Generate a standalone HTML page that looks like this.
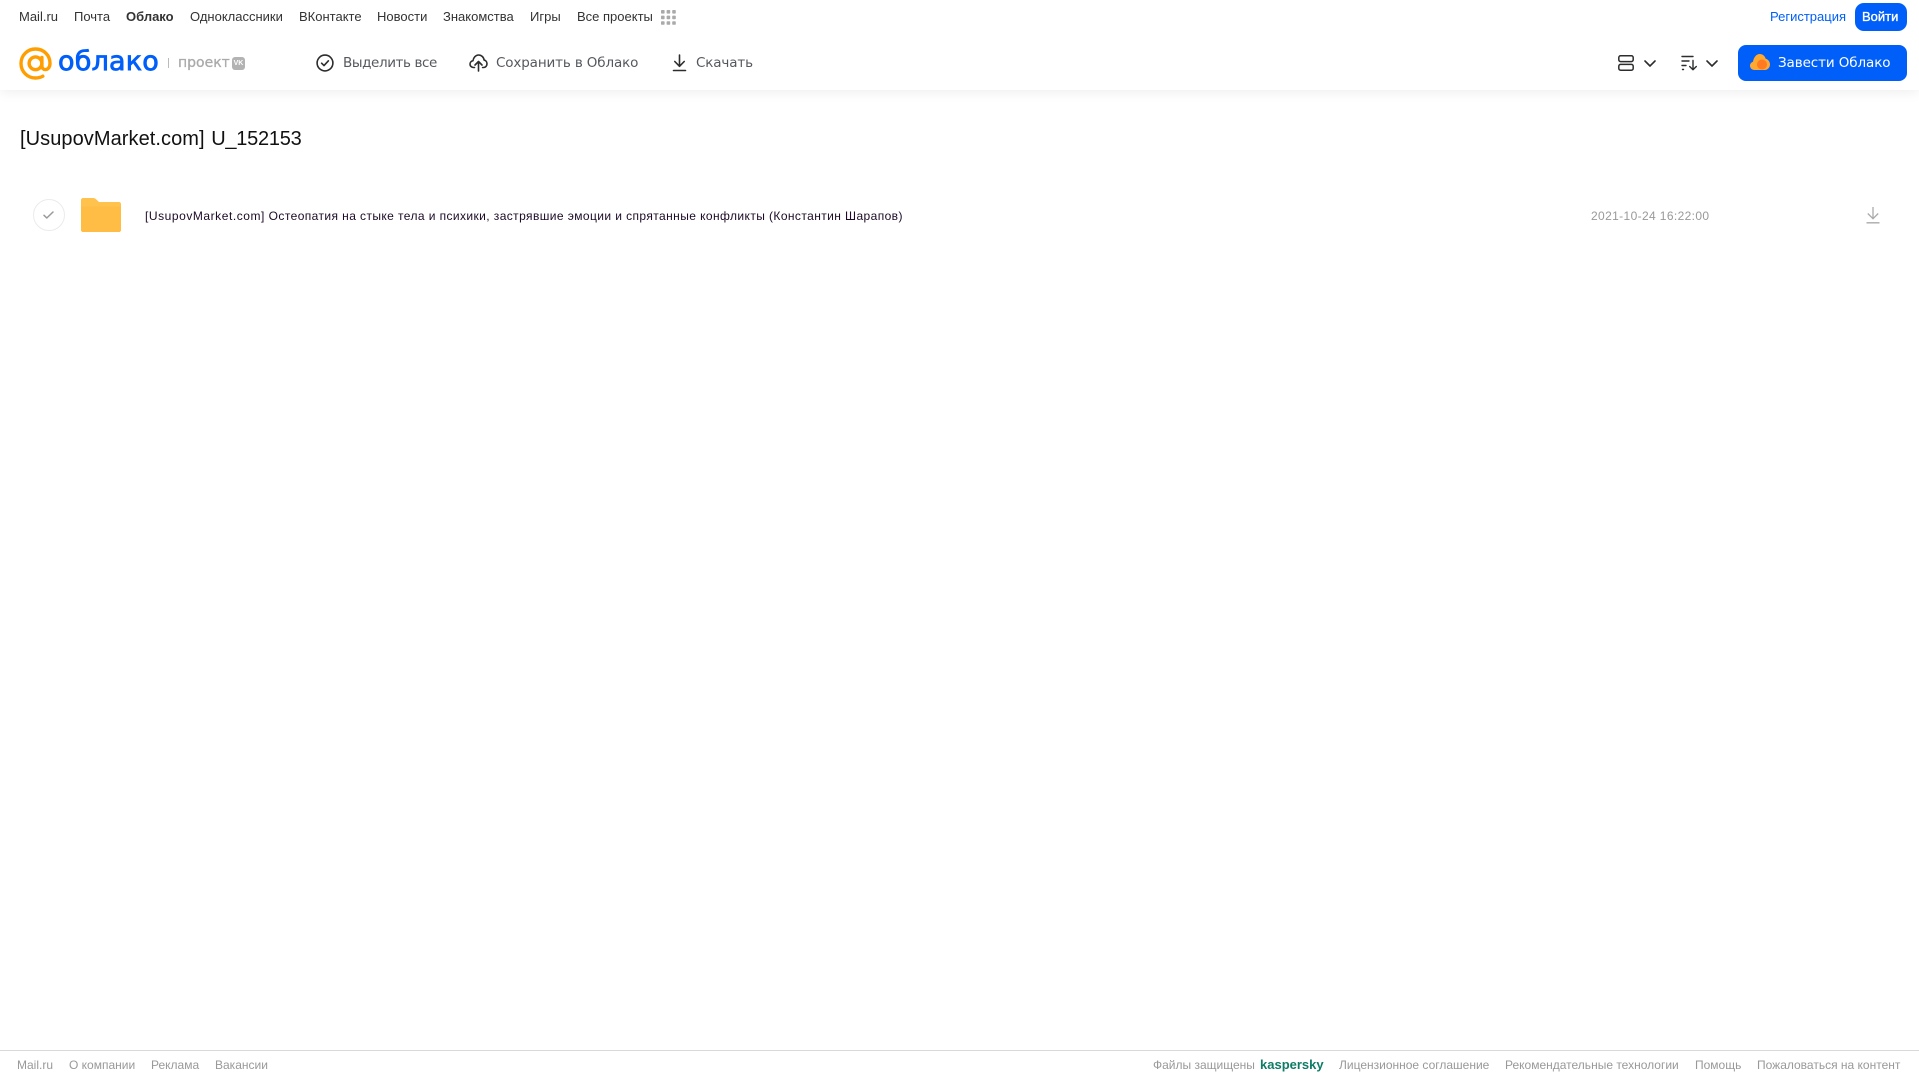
<!DOCTYPE html>
<html lang="ru"><head><meta charset="utf-8"><title>Облако</title>
<style>
html,body{margin:0;padding:0;background:#fff;}
body{width:1919px;height:1079px;overflow:hidden;position:relative;font-family:"Liberation Sans","Noto Sans CJK SC",sans-serif;color:#333;}
.t{position:absolute;white-space:nowrap;line-height:20px;}
.n{font-size:13px;top:7px;color:#333;}
.b{font-family:"DejaVu Sans",sans-serif;font-size:13.5px;top:53px;color:#55585e;}
.f{font-size:12px;top:1055px;color:#999;}
svg{position:absolute;}
</style></head><body>
<div style="position:absolute;left:0;top:0;width:1919px;height:90px;background:#fff;box-shadow:0 2px 12px rgba(0,0,0,.07);"></div>

<span class="t n" style="left:19px;">Mail.ru</span>
<span class="t n" style="left:74px;">Почта</span>
<span class="t n" style="left:126px;font-weight:bold;">Облако</span>
<span class="t n" style="left:190px;">Одноклассники</span>
<span class="t n" style="left:299px;">ВКонтакте</span>
<span class="t n" style="left:377px;">Новости</span>
<span class="t n" style="left:443px;">Знакомства</span>
<span class="t n" style="left:530px;">Игры</span>
<span class="t n" style="left:577px;">Все проекты</span>
<svg style="left:661px;top:10px" width="15" height="15" viewBox="0 0 15 15" fill="#aaa"><rect x="0" y="0" width="3.6" height="3.6" rx=".8"/><rect x="5.6" y="0" width="3.6" height="3.6" rx=".8"/><rect x="11.2" y="0" width="3.6" height="3.6" rx=".8"/><rect x="0" y="5.6" width="3.6" height="3.6" rx=".8"/><rect x="5.6" y="5.6" width="3.6" height="3.6" rx=".8"/><rect x="11.2" y="5.6" width="3.6" height="3.6" rx=".8"/><rect x="0" y="11.2" width="3.6" height="3.6" rx=".8"/><rect x="5.6" y="11.2" width="3.6" height="3.6" rx=".8"/><rect x="11.2" y="11.2" width="3.6" height="3.6" rx=".8"/></svg>

<span class="t n" style="left:1770px;color:#005ff9;">Регистрация</span>
<div style="position:absolute;left:1855px;top:3px;width:52px;height:28px;border-radius:9px;background:#005ff9;"></div>
<span class="t n" style="left:1862px;color:#fff;-webkit-text-stroke:.35px #fff;">Войти</span>

<svg style="left:19px;top:47px" width="33" height="33" viewBox="0 0 33 33" fill="none" stroke="#ff9e00" stroke-width="3.4" stroke-linecap="round"><circle cx="16.5" cy="16.3" r="6.4"/><path d="M22.9 10.500v8.300c0 2.400 1.600 3.800 3.400 3.800 2.500 0 4.700-2.300 4.700-6.300C31 8.200 24.600 2 16.500 2 8.500 2 2 8.400 2 16.500S8.500 31 16.500 31c2.900 0 5.200-.6 7.300-1.800"/></svg>
<span class="t" style="left:58px;top:46px;line-height:32px;font-family:'DejaVu Sans',sans-serif;font-size:27px;color:#005ff9;-webkit-text-stroke:.8px #005ff9;letter-spacing:.2px;">облако</span>
<div style="position:absolute;left:168px;top:58px;width:1px;height:10px;background:#bbb;"></div>
<span class="t" style="left:178px;top:53px;font-family:'DejaVu Sans',sans-serif;font-size:14px;color:#aaa;-webkit-text-stroke:.3px #aaa;">проект</span>
<div style="position:absolute;left:232px;top:57px;width:13px;height:13px;border-radius:3px;background:#b3b3b3;color:#fff;font:bold 7px/13px 'Liberation Sans',sans-serif;text-align:center;">VK</div>

<svg style="left:316px;top:54px" width="18" height="18" viewBox="0 0 18 18" fill="none" stroke="#2c2d2e" stroke-width="1.6" stroke-linecap="round" stroke-linejoin="round"><circle cx="9" cy="9" r="7.9"/><path d="M5.600 9.200l2.400 2.400 4.400-4.800"/></svg>
<span class="t b" style="left:343px;letter-spacing:-.4px;">Выделить все</span>
<svg style="left:469px;top:54px" width="19" height="18" viewBox="0 0 19 18" fill="none" stroke="#2c2d2e" stroke-width="1.6" stroke-linecap="round" stroke-linejoin="round"><path d="M5.500 13.500H4.600C2.600 13.500 1 12 1 10.100c0-1.700 1.300-3.100 3-3.400C4.400 3.500 6.700 1 9.600 1c2.900 0 5.200 2.300 5.500 5.100 1.700.3 2.900 1.900 2.900 3.700 0 2-1.500 3.700-3.500 3.700h-.9"/><path d="M9.500 17V8M6 11l3.500-3.500L13 11"/></svg>
<span class="t b" style="left:496px;letter-spacing:-.14px;">Сохранить в Облако</span>
<svg style="left:672px;top:54px" width="15" height="18" viewBox="0 0 15 18" fill="none" stroke="#2c2d2e" stroke-width="1.6" stroke-linecap="round" stroke-linejoin="round"><path d="M7.500 1v11M2.800 7.500l4.700 4.800 4.700-4.800M1.500 16.500h12"/></svg>
<span class="t b" style="left:696px;letter-spacing:-.15px;">Скачать</span>

<svg style="left:1618px;top:55px" width="16" height="16" viewBox="0 0 16 16" fill="none" stroke="#2c2d2e" stroke-width="1.5"><rect x=".8" y=".8" width="14.400" height="5.800" rx="1.800"/><rect x=".8" y="9.400" width="14.400" height="5.800" rx="1.800"/></svg>
<svg style="left:1644px;top:60px" width="12" height="7" viewBox="0 0 12 7" fill="none" stroke="#2c2d2e" stroke-width="1.6" stroke-linecap="round" stroke-linejoin="round"><path d="M1 1l5 5 5-5"/></svg>
<svg style="left:1681px;top:55px" width="17" height="16" viewBox="0 0 17 16" fill="none" stroke="#2c2d2e" stroke-width="1.400" stroke-linecap="round" stroke-linejoin="round"><path d="M1 1.500h11M1 6h7M1 10.500h4M1.500 14.500h1M12 5.500v9M8.700 11.500l3.300 3.200 3.300-3.200"/></svg>
<svg style="left:1706px;top:60px" width="12" height="7" viewBox="0 0 12 7" fill="none" stroke="#2c2d2e" stroke-width="1.6" stroke-linecap="round" stroke-linejoin="round"><path d="M1 1l5 5 5-5"/></svg>

<div style="position:absolute;left:1738px;top:45px;width:169px;height:36px;border-radius:8px;background:#005ff9;"></div>
<svg style="left:1750px;top:54px" width="20" height="17" viewBox="0 0 20 17"><path d="M4.500 16C2 16 0 14.200 0 11.800c0-2 1.300-3.500 3-4C3.700 3.300 6.400 0 9.700 0c3 0 5.200 2 6 4.800 2.500.6 4.300 3 4.300 5.700 0 3-2.400 5.500-5.300 5.500z" fill="#ffa930"/><circle cx="12" cy="10.500" r="5" fill="#ff7a20"/></svg>
<span class="t b" style="left:1778px;color:#fff;letter-spacing:-.1px;">Завести Облако</span>

<span class="t" style="left:20px;top:127px;line-height:24px;font-size:20px;color:#111;word-spacing:1px;"><span style="letter-spacing:.07px;">[UsupovMarket.com]</span> <span style="letter-spacing:-.25px;">U_152153</span></span>

<div style="position:absolute;left:33px;top:199px;width:30px;height:30px;border:1px solid #ebebeb;border-radius:50%;"></div>
<svg style="left:42px;top:210px" width="13" height="10" viewBox="0 0 13 10" fill="none" stroke="#999" stroke-width="1.500" stroke-linecap="round" stroke-linejoin="round"><path d="M2 5.300l2.800 2.700L11 2"/></svg>
<svg style="left:81px;top:198px" width="40" height="34" viewBox="0 0 40 34"><path d="M2 0h10c1.500 0 2.400.6 3.300 1.500L18 4h20c1.100 0 2 .9 2 2v26c0 1.100-.9 2-2 2H2c-1.100 0-2-.9-2-2V2C0 .9.900 0 2 0z" fill="#ffc24d"/><path d="M0 8.500h40V32c0 1.100-.9 2-2 2H2c-1.100 0-2-.9-2-2z" fill="#ffbd45"/></svg>
<span class="t" style="left:145px;top:206px;font-size:12px;color:#1c0a26;letter-spacing:.41px;"><span style="letter-spacing:.55px;">[UsupovMarket.com]</span> Остеопатия на стыке тела и психики, застрявшие эмоции и спрятанные конфликты (Константин Шарапов)</span>
<span class="t" style="left:1591px;top:206px;font-size:12px;color:#999;letter-spacing:.37px;">2021-10-24 16:22:00</span>
<svg style="left:1866px;top:206px" width="14" height="18" viewBox="0 0 14 18" fill="none" stroke="#aaa" stroke-width="1.300"><path d="M7 1v11.500M1.800 7.500L7 12.700l5.200-5.200M.5 16.800h13"/></svg>

<div style="position:absolute;left:0;top:1050px;width:1919px;height:1px;background:#d9d9d9;"></div>
<span class="t f" style="left:17px;">Mail.ru</span>
<span class="t f" style="left:69px;">О компании</span>
<span class="t f" style="left:151px;">Реклама</span>
<span class="t f" style="left:215px;">Вакансии</span>
<span class="t f" style="left:1153px;">Файлы защищены</span>
<span class="t f" style="left:1260px;color:#0e7c66;font-weight:bold;font-size:13px;">kaspersky</span>
<span class="t f" style="left:1339px;">Лицензионное соглашение</span>
<span class="t f" style="left:1505px;">Рекомендательные технологии</span>
<span class="t f" style="left:1695px;">Помощь</span>
<span class="t f" style="left:1757px;">Пожаловаться на контент</span>
</body></html>
